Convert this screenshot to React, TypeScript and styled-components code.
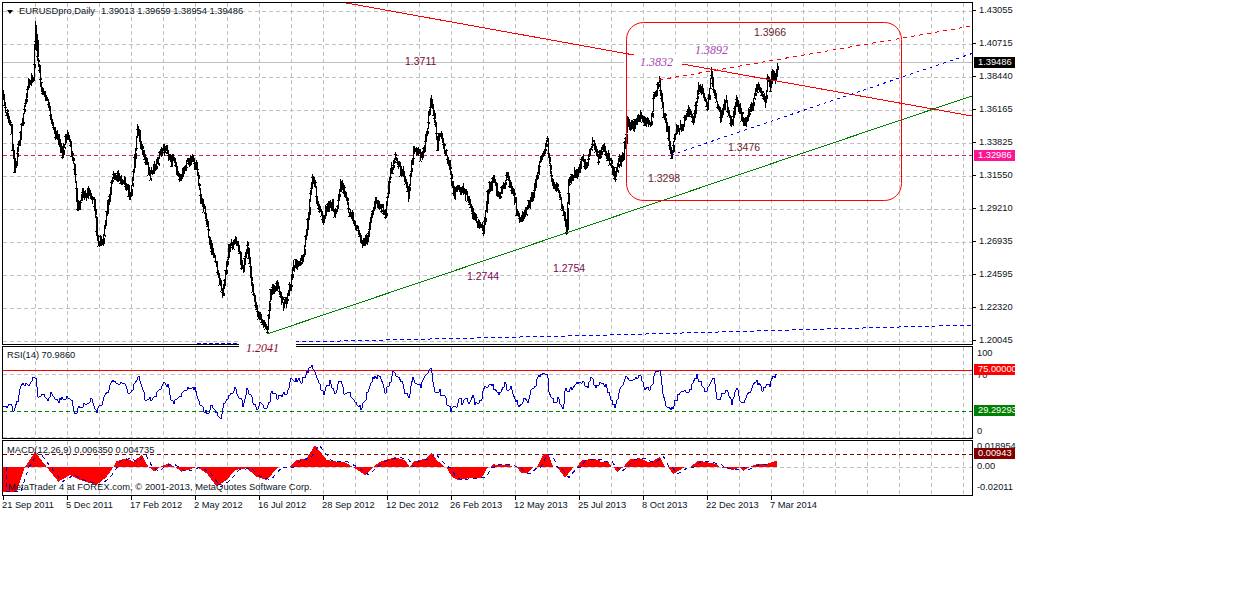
import styled, { createGlobalStyle } from 'styled-components';

const GlobalStyle = createGlobalStyle`
  html, body {
    margin: 0;
    background: #fff;
    color: #000;
    font-family: "Liberation Sans", Arial, sans-serif;
  }
`;

type Pt = [number, number];

// all chart coordinates are page pixels, each svg uses a viewBox that matches its place on the page
const PRICE: Pt[] = [
  [3, 95], [5, 118], [10, 120], [14, 172], [17, 150], [23, 115], [28, 85], [33, 75], [35, 22], [37, 60], [40, 80],
  [47, 100], [50, 115], [53, 125], [58, 140], [62, 150], [67, 130], [70, 145], [74, 175], [77, 205], [82, 195],
  [88, 190], [93, 200], [97, 235], [102, 248], [107, 205], [113, 178], [120, 175], [130, 195], [137, 131],
  [145, 165], [153, 175], [165, 146], [172, 160], [180, 175], [190, 160], [196, 167], [200, 193], [207, 223],
  [210, 243], [215, 260], [222, 295], [228, 253], [235, 237], [243, 267], [247, 243], [252, 290], [258, 313],
  [267, 332], [270, 293], [277, 283], [283, 303], [290, 287], [293, 267], [303, 257], [307, 227], [312, 177],
  [318, 203], [323, 220], [330, 197], [335, 213], [340, 183], [347, 207], [353, 220], [362, 242], [368, 233],
  [375, 200], [385, 213], [390, 173], [395, 157], [403, 170], [408, 193], [413, 147], [422, 157], [431, 100],
  [437, 143], [440, 130], [448, 160], [453, 190], [463, 193], [473, 213], [483, 230], [487, 197], [493, 183],
  [500, 200], [507, 170], [513, 193], [520, 223], [533, 197], [540, 160], [547, 143], [552, 183], [560, 200],
  [566, 232], [568, 183], [578, 167], [587, 160], [592, 143], [598, 160], [603, 143], [610, 163], [615, 177],
  [620, 160], [625, 143], [627, 120], [633, 130], [640, 113], [650, 125], [653, 100], [659, 80], [663, 110],
  [667, 127], [671, 153], [677, 128], [682, 133], [688, 113], [693, 117], [698, 83], [707, 103], [711, 72],
  [713, 90], [720, 113], [725, 100], [732, 123], [736, 95], [743, 128], [752, 107], [757, 88], [763, 93],
  [765, 105], [767, 80], [770, 95], [772, 70], [775, 77], [777, 62],
];

const fromZoom = (pts: number[][], left: number, top: number): Pt[] =>
  pts.map(([x, y]) => [left + x / 3, top + y / 3] as Pt);

const RSI: Pt[] = [
  ...fromZoom([
    [10, 232], [22, 235], [30, 215], [40, 245], [55, 205], [65, 165], [85, 165], [105, 135], [115, 205], [130, 185],
    [145, 210], [155, 190], [170, 215], [190, 205], [215, 205], [225, 250], [240, 230], [260, 225], [275, 205],
    [290, 250], [305, 220], [320, 190], [340, 150], [355, 170], [370, 155], [390, 195], [415, 138], [435, 205],
    [460, 210], [490, 160], [505, 165], [515, 220], [545, 195], [565, 175], [585, 175], [600, 225], [625, 255],
    [635, 225], [660, 265], [680, 205], [705, 175], [730, 225], [740, 178], [770, 235], [785, 215], [800, 245],
    [815, 185], [835, 205], [860, 185], [875, 145], [905, 155], [935, 105], [970, 190], [990, 155], [1005, 195],
    [1020, 150], [1035, 195], [1050, 190], [1085, 240], [1115, 150], [1140, 130], [1155, 195], [1180, 130],
    [1205, 155], [1225, 210],
  ], 0, 330),
  ...fromZoom([
    [0, 160], [5, 105], [12, 100], [20, 120], [35, 122], [45, 95], [60, 75], [65, 75], [72, 130], [80, 150],
    [90, 135], [97, 155], [107, 145], [112, 175], [125, 197], [132, 180], [140, 190], [150, 160], [157, 180],
    [167, 155], [175, 180], [187, 152], [197, 180], [215, 165], [222, 130], [235, 118], [245, 115], [255, 135],
    [268, 150], [285, 110], [292, 135], [302, 125], [315, 160], [332, 185], [345, 155], [355, 170], [365, 130],
    [378, 120], [385, 95], [400, 85], [411, 82], [420, 150], [435, 170], [445, 160], [460, 190], [466, 130],
    [475, 140], [490, 125], [510, 110], [520, 105], [530, 130], [545, 100], [560, 130], [575, 105],
  ], 410, 345),
  ...fromZoom([
    [0, 150], [20, 170], [35, 215], [45, 230], [60, 175], [80, 135], [95, 155], [120, 135], [135, 175], [150, 180],
    [165, 130], [180, 125], [195, 225], [215, 237], [240, 185], [270, 180], [290, 135], [315, 185], [340, 145],
    [355, 215], [370, 185], [385, 185], [395, 220], [410, 172], [425, 225], [470, 150], [490, 185], [500, 155],
    [510, 175], [515, 145], [530, 135],
  ], 600, 330),
];

const MACD: Pt[] = [
  ...fromZoom([
    [8, 411], [8, 485], [50, 485], [75, 411], [105, 365], [140, 411], [175, 455], [210, 435], [240, 450], [290, 465],
    [320, 440], [340, 411], [350, 393], [380, 385], [400, 395], [425, 375], [445, 410], [465, 425], [480, 411],
    [505, 400], [525, 411], [545, 425], [565, 420], [590, 411], [620, 430], [650, 470], [680, 450], [705, 420],
    [740, 415], [770, 440], [800, 450], [835, 411], [870, 411], [890, 390], [920, 385], [945, 345], [980, 390],
    [1010, 395], [1030, 395], [1060, 411], [1095, 435], [1120, 411], [1140, 395], [1185, 382], [1215, 390],
  ], 0, 330),
  ...fromZoom([
    [0, 367], [10, 350], [30, 345], [50, 340], [65, 325], [80, 345], [105, 367], [110, 367], [125, 395], [145, 405],
    [175, 400], [215, 398], [233, 367], [240, 367], [250, 358], [270, 360], [290, 358], [312, 367], [320, 367],
    [335, 385], [350, 385], [370, 367], [380, 367], [400, 328], [415, 328], [430, 367], [440, 367], [450, 378],
    [465, 398], [490, 367], [500, 367], [515, 346], [545, 342], [570, 345],
  ], 410, 345),
  ...fromZoom([
    [0, 395], [25, 395], [35, 411], [40, 411], [52, 425], [70, 411], [90, 388], [120, 385], [150, 398], [180, 380],
    [195, 411], [205, 411], [220, 432], [255, 411], [270, 411], [295, 392], [350, 402], [360, 411], [400, 420],
    [420, 411], [430, 422], [450, 411], [470, 402], [500, 402], [530, 392], [530, 411],
  ], 600, 330),
];

const interpolate = (pts: Pt[], x: number) => {
  for (let i = 1; i < pts.length; i++) {
    if (x <= pts[i][0]) {
      const [x0, y0] = pts[i - 1];
      const [x1, y1] = pts[i];
      return x1 === x0 ? y1 : y0 + ((y1 - y0) * (x - x0)) / (x1 - x0);
    }
  }
  return pts[pts.length - 1][1];
};

const rng = (seed: number) => () => {
  seed = (seed * 1664525 + 1013904223) % 4294967296;
  return seed / 4294967296;
};

const buildBars = () => {
  const rand = rng(20140307);
  let d = '';
  let prev = interpolate(PRICE, 3);
  let drift = 0;
  for (let x = 3; x <= 777; x++) {
    // a slower wobble on top of the daily noise, so the series doesn't look traced
    if (x % 4 === 0) drift = (rand() - 0.5) * 9;
    const c = interpolate(PRICE, x) + drift + (rand() - 0.5) * 5;
    const high = Math.round(Math.min(c - 1 - rand() * 5, prev));
    const low = Math.round(Math.max(c + 1 + rand() * 5, prev));
    const open = Math.round(high + rand() * (low - high));
    const close = Math.round(high + rand() * (low - high));
    d += `M${x + 0.5} ${high}V${low}M${x + 1.5} ${Math.min(open, close)}V${Math.max(open, close) + 1}`;
    d += `M${x - 1} ${open + 0.5}H${x}`;
    prev = c;
  }
  return d;
};

const jitterLine = (pts: Pt[]) => {
  const rand = rng(75);
  const out: Pt[] = [];
  const end = pts[pts.length - 1][0];
  for (let x = pts[0][0]; x <= end; x += 1.2) {
    out.push([Math.round(x), Math.round(interpolate(pts, x) + (rand() - 0.5) * 5)]);
  }
  out.push(pts[pts.length - 1]);
  return out;
};

const BARS_PATH = buildBars();
const toLine = (pts: Pt[]) => pts.map(([x, y]) => `${x.toFixed(1)},${y.toFixed(1)}`).join(' ');
const RSI_LINE = jitterLine(RSI);
const ZERO = 467;
const MACD_AREA = `3,${ZERO} ${toLine(MACD)} 777,${ZERO}`;
const SIGNAL = MACD.map(([x, y]) => [x + 4, y] as Pt).filter(([x]) => x <= 777);

const GRID_X = Array.from({ length: 30 }, (_, i) => 35 + 32 * i);
const GRID_Y = Array.from({ length: 11 }, (_, i) => 11 + 33 * i);

const PRICES = ['1.43055', '1.40715', '1.38440', '1.36165', '1.33825', '1.31550', '1.29210', '1.26935', '1.24595', '1.22320', '1.20045'];
const DATES = ['21 Sep 2011', '5 Dec 2011', '17 Feb 2012', '2 May 2012', '16 Jul 2012', '28 Sep 2012', '12 Dec 2012', '26 Feb 2013', '12 May 2013', '25 Jul 2013', '8 Oct 2013', '22 Dec 2013', '7 Mar 2014'];

const Terminal = styled.div`
  width: 1257px;
  height: 616px;
  padding: 2px 0 0 2px;
  box-sizing: border-box;
  overflow: hidden;
  display: flex;
  flex-direction: column;
  gap: 1px;
  background: #fff;
`;

const Pane = styled.div`
  display: flex;
`;

const Plot = styled.div<{ $height: number }>`
  position: relative;
  width: 969px;
  height: ${(p) => p.$height}px;
  border: 1px solid #000;
  font-size: 9.3px;
  line-height: 11px;
  svg {
    display: block;
  }
`;

const Legend = styled.div`
  position: absolute;
  left: 4px;
  top: 3px;
  display: flex;
  align-items: center;
  gap: 6px;
  white-space: nowrap;
  color: #0a1424;
`;

const Arrow = styled.i`
  width: 0;
  height: 0;
  border: 3.5px solid transparent;
  border-top: 4px solid #000;
  border-bottom: 0;
`;

const Indicator = styled.div<{ $top: number }>`
  position: absolute;
  left: 4px;
  top: ${(p) => p.$top}px;
  white-space: nowrap;
  color: #0a1424;
`;

const Copyright = styled(Indicator)`
  left: 5px;
  letter-spacing: 0.06px;
`;

const Note = styled.span<{ $x: number; $y: number; $tone: string; $serif?: boolean; $blank?: [number, number] }>`
  position: absolute;
  z-index: 3;
  left: ${(p) => p.$x - 3}px;
  top: ${(p) => p.$y - 3}px;
  white-space: nowrap;
  color: ${(p) => p.$tone};
  font-size: ${(p) => (p.$serif ? 12 : 10.5)}px;
  line-height: 12px;
  font-family: ${(p) => (p.$serif ? '"Liberation Serif", "Times New Roman", serif' : 'inherit')};
  font-style: ${(p) => (p.$serif ? 'italic' : 'normal')};
  background: ${(p) => (p.$blank ? '#fff' : 'transparent')};
  padding: ${(p) => (p.$blank ? `2px ${p.$blank[1]}px 2px ${p.$blank[0]}px` : '0')};
  margin: ${(p) => (p.$blank ? `-2px -${p.$blank[1]}px -2px -${p.$blank[0]}px` : '0')};
`;

const PriceAxis = styled.div`
  position: relative;
  flex: none;
  width: 60px;
  margin-bottom: -1px;
  padding-top: 3px;
  display: flex;
  flex-direction: column;
  gap: 22px;
  font-size: 9.3px;
  line-height: 11px;
`;

const Tick = styled.div<{ $mark?: boolean; $gap?: number }>`
  height: 11px;
  display: flex;
  align-items: center;
  gap: 3px;
  margin-top: ${(p) => p.$gap ?? 0}px;
  padding-left: ${(p) => (p.$mark ? 0 : 4)}px;
  color: #0a1424;
  &::before {
    content: ${(p) => (p.$mark ? '""' : 'none')};
    width: 3px;
    height: 1px;
    background: #000;
  }
`;

const SideAxis = styled(PriceAxis)<{ $pad: number }>`
  padding-top: ${(p) => p.$pad}px;
  margin-bottom: 0;
  gap: 0;
`;

const Tag = styled.div<{ $top: number; $bg: string }>`
  position: absolute;
  left: 1px;
  top: ${(p) => p.$top}px;
  width: 37px;
  height: 11px;
  padding-left: 4px;
  overflow: hidden;
  white-space: nowrap;
  color: #fff;
  background: ${(p) => p.$bg};
`;

const TimeAxis = styled.div`
  display: flex;
  font-size: 9.3px;
  line-height: 11px;
  color: #0a1424;
`;

const TimeCell = styled.div`
  position: relative;
  flex: none;
  width: 64px;
  height: 20px;
  padding-top: 3px;
  box-sizing: border-box;
  white-space: nowrap;
  &::before {
    content: '';
    position: absolute;
    left: 1px;
    top: -1px;
    width: 1px;
    height: 4px;
    background: #000;
  }
`;

const Grid = ({ top, bottom, rows }: { top: number; bottom: number; rows: number[] }) => (
  <g stroke="#c0c0c0" strokeDasharray="4 3" shapeRendering="crispEdges" fill="none">
    {GRID_X.map((x) => (
      <line key={x} x1={x + 0.5} x2={x + 0.5} y1={top} y2={bottom} />
    ))}
    {rows.map((y) => (
      <line key={y} x1={3} x2={972} y1={y + 0.5} y2={y + 0.5} />
    ))}
  </g>
);

const MainChart = () => (
  <svg width={969} height={341} viewBox="3 3 969 341">
    <Grid top={3} bottom={344} rows={GRID_Y} />
    <g stroke="#c0c0c0" shapeRendering="crispEdges">
      <line x1={3} x2={624} y1={62.5} y2={62.5} />
      <line x1={682} x2={972} y1={62.5} y2={62.5} />
    </g>
    <line x1={3} x2={972} y1={155.5} y2={155.5} stroke="#dc1a6c" strokeDasharray="4 3" shapeRendering="crispEdges" />
    <path d={BARS_PATH} stroke="#000" fill="none" shapeRendering="crispEdges" />
    <g fill="none" shapeRendering="crispEdges">
      <polyline points="341,2 634,55" stroke="#f00" />
      <polyline points="682,64 972,116" stroke="#f00" />
      <polyline points="659,80 972,26" stroke="#f00" strokeDasharray="4 4" />
      <polyline points="671,155 972,53.5" stroke="#00f" strokeDasharray="3 4" />
      <polyline points="267,334 972,96" stroke="#008000" />
      <polyline points="197,343.5 240,343.5" stroke="#00f" strokeDasharray="4 2" />
      <polyline points="295,342 610,335 972,325" stroke="#00f" strokeDasharray="4 3" />
    </g>
    <rect x={626.5} y={22.5} width={275} height={178} rx={17} fill="none" stroke="#f00" />
  </svg>
);

const RsiChart = () => (
  <svg width={969} height={91} viewBox="3 347 969 91">
    <Grid top={347} bottom={438} rows={[374, 437]} />
    <line x1={3} x2={972} y1={370.5} y2={370.5} stroke="#f00" shapeRendering="crispEdges" />
    <line x1={3} x2={972} y1={411.5} y2={411.5} stroke="#008000" strokeDasharray="4 3" shapeRendering="crispEdges" />
    <polyline points={toLine(RSI_LINE)} fill="none" stroke="#0000cd" shapeRendering="crispEdges" />
  </svg>
);

const MacdChart = () => (
  <svg width={969} height={54} viewBox="3 441 969 54">
    <Grid top={441} bottom={495} rows={[ZERO]} />
    <line x1={3} x2={972} y1={454.5} y2={454.5} stroke="#800000" strokeDasharray="4 3" shapeRendering="crispEdges" />
    <polygon points={MACD_AREA} fill="#f00" shapeRendering="crispEdges" />
    <polyline points={toLine(SIGNAL)} fill="none" stroke="#0000cd" strokeDasharray="4 4" shapeRendering="crispEdges" />
  </svg>
);

export default function App() {
  return (
    <>
      <GlobalStyle />
      <Terminal>
        <Pane>
          <Plot $height={341}>
            <MainChart />
            <Legend>
              <Arrow />
              <span>EURUSDpro,Daily</span>
              <span>1.39013 1.39659 1.38954 1.39486</span>
            </Legend>
            <Note $x={405} $y={55} $tone="#7a0a2e">1.3711</Note>
            <Note $x={754} $y={26} $tone="#6a1c2c">1.3966</Note>
            <Note $x={728} $y={141} $tone="#6a1c2c">1.3476</Note>
            <Note $x={648} $y={172} $tone="#6a1c2c">1.3298</Note>
            <Note $x={467} $y={270} $tone="#7a0a4e">1.2744</Note>
            <Note $x={553} $y={262} $tone="#7a0a4e">1.2754</Note>
            <Note $x={640} $y={56} $tone="#a63fb5" $serif $blank={[6, 9]}>1.3832</Note>
            <Note $x={695} $y={44} $tone="#a63fb5" $serif>1.3892</Note>
            <Note $x={246} $y={342} $tone="#8b0a2e" $serif $blank={[7, 17]}>1.2041</Note>
          </Plot>
          <PriceAxis>
            {PRICES.map((p) => (
              <Tick key={p} $mark>{p}</Tick>
            ))}
            <Tag $top={55} $bg="#000">1.39486</Tag>
            <Tag $top={148} $bg="#ff1493">1.32986</Tag>
          </PriceAxis>
        </Pane>
        <Pane>
          <Plot $height={91}>
            <RsiChart />
            <Indicator $top={3}>RSI(14) 70.9860</Indicator>
          </Plot>
          <SideAxis $pad={2}>
            <Tick>100</Tick>
            <Tick $gap={11}>70</Tick>
            <Tick $gap={45}>0</Tick>
            <Tag $top={18} $bg="#f00">75.00000</Tag>
            <Tag $top={59} $bg="#008000">29.29293</Tag>
          </SideAxis>
        </Pane>
        <Pane>
          <Plot $height={54}>
            <MacdChart />
            <Indicator $top={4}>MACD(12,26,9) 0.006350 0.004735</Indicator>
            <Copyright $top={41}>MetaTrader 4 at FOREX.com, © 2001-2013, MetaQuotes Software Corp.</Copyright>
          </Plot>
          <SideAxis $pad={1}>
            <Tick>0.018954</Tick>
            <Tick $gap={9}>0.00</Tick>
            <Tick $gap={10}>-0.02011</Tick>
            <Tag $top={8} $bg="#800000">0.00943</Tag>
          </SideAxis>
        </Pane>
        <TimeAxis>
          {DATES.map((d) => (
            <TimeCell key={d}>{d}</TimeCell>
          ))}
        </TimeAxis>
      </Terminal>
    </>
  );
}
